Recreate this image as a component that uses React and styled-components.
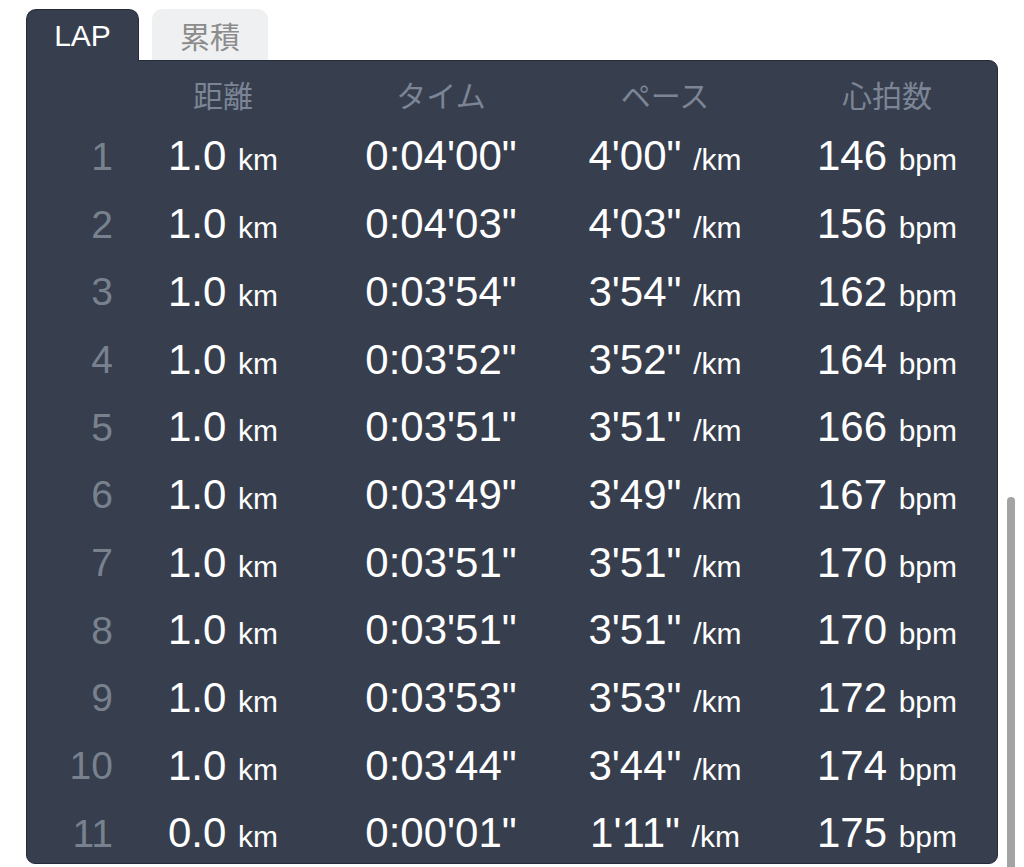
import React from 'react';
import styled, { createGlobalStyle } from 'styled-components';

const laps = [
  ['1.0', "0:04'00\"", "4'00\"", '146'],
  ['1.0', "0:04'03\"", "4'03\"", '156'],
  ['1.0', "0:03'54\"", "3'54\"", '162'],
  ['1.0', "0:03'52\"", "3'52\"", '164'],
  ['1.0', "0:03'51\"", "3'51\"", '166'],
  ['1.0', "0:03'49\"", "3'49\"", '167'],
  ['1.0', "0:03'51\"", "3'51\"", '170'],
  ['1.0', "0:03'51\"", "3'51\"", '170'],
  ['1.0', "0:03'53\"", "3'53\"", '172'],
  ['1.0', "0:03'44\"", "3'44\"", '174'],
  ['0.0', "0:00'01\"", "1'11\"", '175'],
];

const headers = ['距離', 'タイム', 'ペース', '心拍数'];

const GlobalStyle = createGlobalStyle`
  html, body {
    margin: 0;
    padding: 0;
    background: #ffffff;
  }
  body {
    font-family: 'Liberation Sans', Arial, 'Noto Sans CJK JP', sans-serif;
  }
`;

const Page = styled.div`
  position: relative;
  width: 1024px;
  height: 867px;
  overflow: hidden;
  padding: 9px 0 0 26px;
  box-sizing: border-box;
`;

const Tabs = styled.div`
  display: flex;
  gap: 13px;
`;

const Tab = styled.div`
  position: relative;
  z-index: 1;
  display: flex;
  align-items: center;
  justify-content: center;
  width: ${({ $w }) => $w}px;
  height: 51px;
  box-sizing: border-box;
  border-radius: 10px 10px 0 0;
  font-size: 30px;
  font-family: 'Liberation Sans', 'Noto Sans CJK JP', sans-serif;
  padding-top: 1px;
  color: ${({ $active }) => ($active ? '#ffffff' : '#8c8c8c')};
  background: ${({ $active }) => ($active ? '#373e4e' : '#eff0f2')};
  border: ${({ $active }) => ($active ? '1px solid #262b3a' : 'none')};
  border-bottom: none;
  margin-bottom: ${({ $active }) => ($active ? '-1px' : '0')};
  height: ${({ $active }) => ($active ? '52px' : '51px')};
`;

const Panel = styled.div`
  width: 972px;
  height: 804px;
  box-sizing: border-box;
  background: #373e4e;
  border: 1px solid #262b3a;
  border-radius: 0 9px 9px 9px;
  overflow: hidden;
`;

const Row = styled.div`
  display: grid;
  grid-template-columns: 86px 220px 216px 232px 212px;
  align-items: center;
  height: ${({ $h }) => $h}px;
`;

const HeadCell = styled.div`
  justify-self: center;
  padding-top: 5px;
  font-family: 'Noto Sans CJK JP', sans-serif;
  font-size: 30px;
  color: #7b8595;
  line-height: 1;
`;

const LapNo = styled.div`
  justify-self: end;
  font-size: 39px;
  color: #78828f;
  line-height: 1;
`;

const Value = styled.div`
  justify-self: center;
  font-size: 42px;
  color: #ffffff;
  line-height: 1;
  white-space: nowrap;
`;

const Unit = styled.span`
  font-size: 30px;
`;

const ScrollThumb = styled.div`
  position: absolute;
  top: 497px;
  right: 9px;
  width: 8px;
  height: 420px;
  border-radius: 4px;
  background: #a3a3a3;
`;

export default function App() {
  return (
    <Page>
      <GlobalStyle />
      <Tabs>
        <Tab $active $w={113}>LAP</Tab>
        <Tab $w={116}>累積</Tab>
      </Tabs>
      <Panel>
        <Row $h={61.6}>
          <div />
          {headers.map((h) => (
            <HeadCell key={h}>{h}</HeadCell>
          ))}
        </Row>
        {laps.map(([dist, time, pace, hr], i) => (
          <Row $h={67.7} key={i}>
            <LapNo>{i + 1}</LapNo>
            <Value>
              {dist} <Unit>km</Unit>
            </Value>
            <Value>{time}</Value>
            <Value>
              {pace} <Unit>/km</Unit>
            </Value>
            <Value>
              {hr} <Unit>bpm</Unit>
            </Value>
          </Row>
        ))}
      </Panel>
      <ScrollThumb />
    </Page>
  );
}
